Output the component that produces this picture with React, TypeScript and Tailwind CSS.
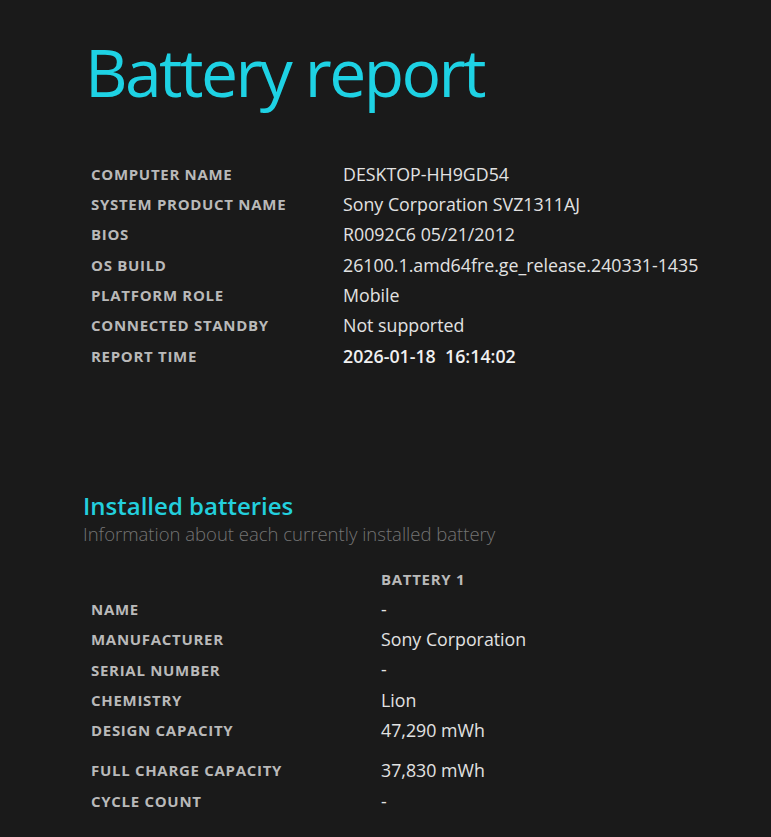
const systemRows = [
  { label: "COMPUTER NAME", value: "DESKTOP-HH9GD54" },
  { label: "SYSTEM PRODUCT NAME", value: "Sony Corporation SVZ1311AJ" },
  { label: "BIOS", value: "R0092C6 05/21/2012" },
  { label: "OS BUILD", value: "26100.1.amd64fre.ge_release.240331-1435" },
  { label: "PLATFORM ROLE", value: "Mobile" },
  { label: "CONNECTED STANDBY", value: "Not supported" },
];

const batteryRows = [
  { label: "NAME", value: "-" },
  { label: "MANUFACTURER", value: "Sony Corporation" },
  { label: "SERIAL NUMBER", value: "-" },
  { label: "CHEMISTRY", value: "Lion" },
  { label: "DESIGN CAPACITY", value: "47,290 mWh" },
];

function Row({ label, value, labelWidth, bold }: { label: string; value: string; labelWidth: string; bold?: boolean }) {
  return (
    <div className="flex items-center h-[30.3px]">
      <div className={`${labelWidth} shrink-0 text-[15px] font-bold tracking-[0.7px] text-[#b9b9b9]`}>{label}</div>
      <div className={`whitespace-pre text-[17.8px] ${bold ? "font-semibold text-[#f0f0f0]" : "text-[#e2e2e2]"}`}>{value}</div>
    </div>
  );
}

export default function App() {
  return (
    <div
      className="min-h-[837px] w-[771px] bg-[#1a1a1a] pl-[83px] pt-[23px] pb-6 overflow-hidden"
      style={{ fontFamily: '"Open Sans", "Noto Sans", sans-serif' }}
    >
      <h1 className="ml-[2px] text-[66px] leading-[96px] text-[#1ed2e4] tracking-[-2.6px]">Battery report</h1>

      <div className="mt-[40px] ml-[8px]">
        {systemRows.map((r) => (
          <Row key={r.label} label={r.label} value={r.value} labelWidth="w-[252px]" />
        ))}
        <Row label="REPORT TIME" value="2026-01-18  16:14:02" labelWidth="w-[252px]" bold />
      </div>

      <h2 className="mt-[120px] text-[24px] leading-[30px] font-semibold text-[#23cfdd]">Installed batteries</h2>
      <p className="text-[18.5px] leading-[26px] font-light text-[#747474]">Information about each currently installed battery</p>

      <div className="mt-[17px] ml-[8px]">
        <div className="flex items-center h-[30px]">
          <div className="w-[290px] shrink-0" />
          <div className="text-[15px] font-bold tracking-[0.7px] text-[#b9b9b9]">BATTERY 1</div>
        </div>
        {batteryRows.map((r) => (
          <Row key={r.label} label={r.label} value={r.value} labelWidth="w-[290px]" />
        ))}
        <div className="mt-[10px]">
          <Row label="FULL CHARGE CAPACITY" value="37,830 mWh" labelWidth="w-[290px]" />
          <Row label="CYCLE COUNT" value="-" labelWidth="w-[290px]" />
        </div>
      </div>
    </div>
  );
}
